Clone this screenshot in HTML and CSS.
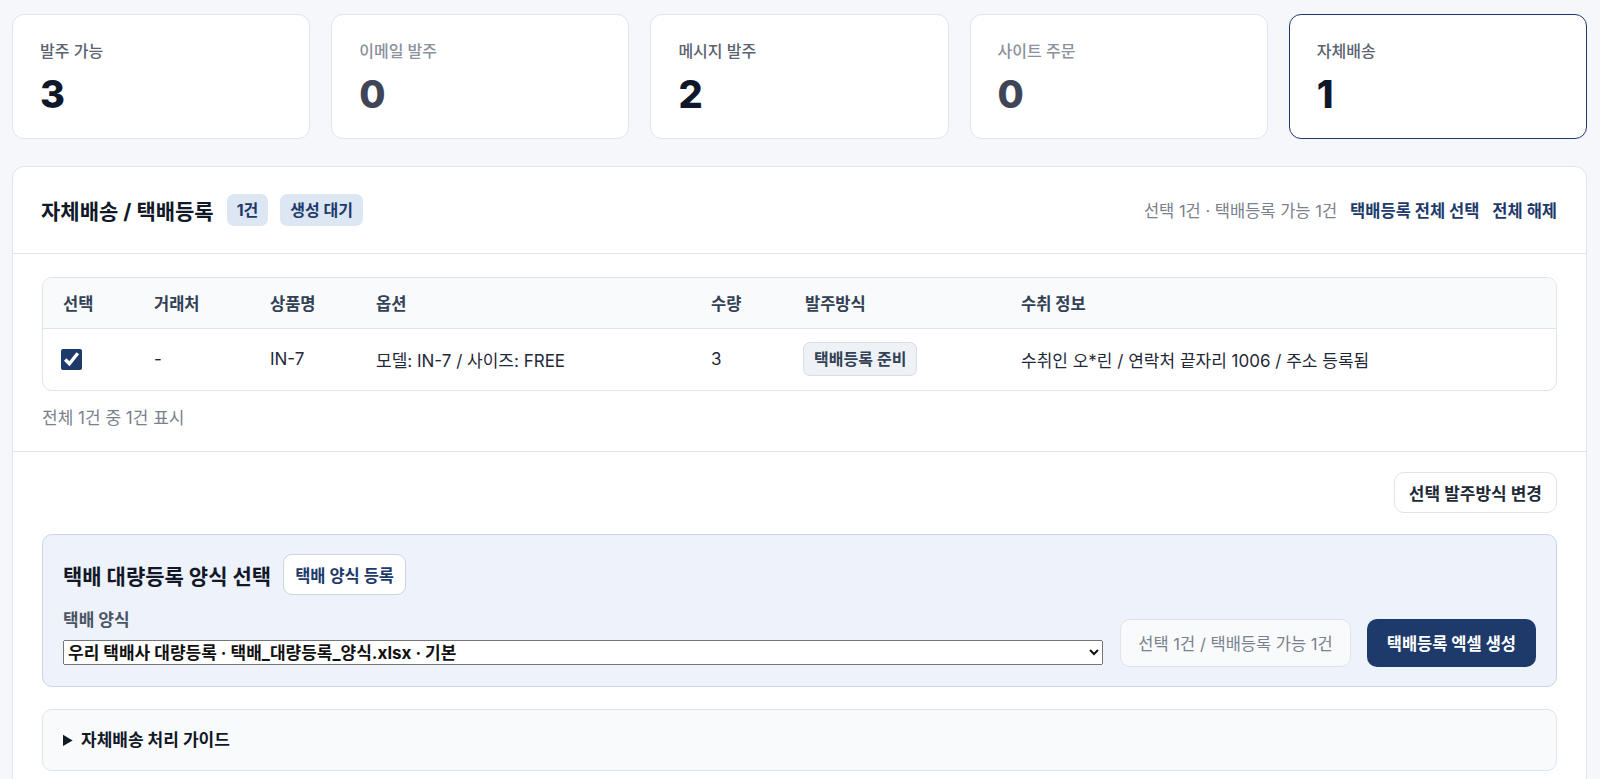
FILE: index.html
```
<!DOCTYPE html>
<html lang="ko">
<head>
  <meta charset="UTF-8">
  <title>자체배송 / 택배등록</title>
  <meta name="viewport" content="width=device-width, initial-scale=1.0">
  <link rel="stylesheet" href="styles.css">
</head>
<body>

  <section class="stats">
    <div class="stat-card">
      <div class="stat-label strong">발주 가능</div>
      <div class="stat-value">3</div>
    </div>
    <div class="stat-card">
      <div class="stat-label">이메일 발주</div>
      <div class="stat-value muted">0</div>
    </div>
    <div class="stat-card">
      <div class="stat-label strong">메시지 발주</div>
      <div class="stat-value">2</div>
    </div>
    <div class="stat-card">
      <div class="stat-label">사이트 주문</div>
      <div class="stat-value muted">0</div>
    </div>
    <div class="stat-card active">
      <div class="stat-label strong">자체배송</div>
      <div class="stat-value">1</div>
    </div>
  </section>

  <section class="panel">
    <div class="panel-header">
      <div class="panel-title">
        <h2>자체배송 / 택배등록</h2>
        <span class="badge">1건</span>
        <span class="badge">생성 대기</span>
      </div>
      <div class="panel-actions">
        <span class="summary-text">선택 1건 · 택배등록 가능 1건</span>
        <a href="#" class="link-btn">택배등록 전체 선택</a>
        <a href="#" class="link-btn">전체 해제</a>
      </div>
    </div>

    <div class="table-section">
      <div class="table-wrap">
        <table class="order-table">
          <thead>
            <tr>
              <th class="col-check">선택</th>
              <th class="col-vendor">거래처</th>
              <th class="col-product">상품명</th>
              <th class="col-option">옵션</th>
              <th class="col-qty">수량</th>
              <th class="col-method">발주방식</th>
              <th>수취 정보</th>
            </tr>
          </thead>
          <tbody>
            <tr>
              <td><input type="checkbox" class="row-check" checked></td>
              <td>-</td>
              <td>IN-7</td>
              <td>모델: IN-7 / 사이즈: FREE</td>
              <td>3</td>
              <td><span class="tag">택배등록 준비</span></td>
              <td>수취인 오*린 / 연락처 끝자리 1006 / 주소 등록됨</td>
            </tr>
          </tbody>
        </table>
      </div>
      <p class="table-count">전체 1건 중 1건 표시</p>
    </div>

    <div class="action-section">
      <div class="action-row">
        <button type="button" class="btn-outline">선택 발주방식 변경</button>
      </div>

      <div class="courier-box">
        <div class="courier-main">
          <div class="courier-title">
            <h3>택배 대량등록 양식 선택</h3>
            <button type="button" class="btn-white">택배 양식 등록</button>
          </div>
          <label for="courierForm" class="field-label">택배 양식</label>
          <select id="courierForm" class="courier-select">
            <option>우리 택배사 대량등록 · 택배_대량등록_양식.xlsx · 기본</option>
          </select>
        </div>
        <div class="courier-side">
          <div class="info-box">선택 1건 / 택배등록 가능 1건</div>
          <button type="button" class="btn-primary">택배등록 엑셀 생성</button>
        </div>
      </div>

      <details class="guide">
        <summary>자체배송 처리 가이드</summary>
      </details>
    </div>
  </section>

</body>
</html>
```

FILE: styles.css
```
:root {
  --navy: #1d3a6b;
  --border: #dde4ee;
  --text: #1f2937;
  --grey: #7a818c;
  --bg: #f5f7fb;
}

* {
  box-sizing: border-box;
}

body {
  font-family: Inter, "Noto Sans CJK KR", sans-serif;
  background: var(--bg);
  color: var(--text);
  margin: 0;
  padding: 14px 13px 40px 12px;
}

/* stat cards */
.stats {
  display: grid;
  grid-template-columns: repeat(5, 1fr);
  gap: 21px;
}

.stat-card {
  background: white;
  border: 1px solid var(--border);
  border-radius: 12px;
  padding: 25px 27px 0;
  height: 125px;
}

.stat-card.active {
  border: 1.5px solid var(--navy);
}

.stat-label {
  font-size: 16px;
  line-height: 22px;
  color: #8a919c;
  font-weight: 500;
}

.stat-label.strong {
  color: #5b6370;
}

.stat-value {
  font-family: Inter, sans-serif;
  font-size: 38px;
  line-height: 44px;
  font-weight: 800;
  color: #0f172a;
  margin-top: 10px;
}

.stat-value.muted {
  color: #3f4556;
}

/* main panel */
.panel {
  margin-top: 27px;
  background: white;
  border: 1px solid var(--border);
  border-radius: 12px;
}

.panel-header {
  display: flex;
  justify-content: space-between;
  align-items: center;
  height: 87px;
  padding: 0 29px 0 28px;
  border-bottom: 1px solid var(--border);
}

.panel-title {
  display: flex;
  align-items: center;
  gap: 12px;
}

.panel-title h2 {
  font-size: 21px;
  font-weight: 700;
  color: #111827;
  margin: 0 1px 0 0;
}

.badge {
  background: #dde6f3;
  color: var(--navy);
  font-size: 16px;
  font-weight: 700;
  border-radius: 7px;
  padding: 0 10px;
  line-height: 32px;
}

.panel-actions {
  display: flex;
  align-items: center;
  gap: 13px;
  font-size: 16.5px;
}

.summary-text {
  color: var(--grey);
}

.link-btn {
  color: var(--navy);
  font-weight: 700;
  text-decoration: none;
}

/* table */
.table-section {
  padding: 23px 29px 0;
  border-bottom: 1px solid var(--border);
}

.table-wrap {
  border: 1px solid var(--border);
  border-radius: 10px;
  overflow: hidden;
}

.order-table {
  width: 100%;
  border-collapse: collapse;
  table-layout: fixed;
}

.order-table th {
  background: #f8fafc;
  text-align: left;
  font-size: 16.5px;
  font-weight: 700;
  color: #334155;
  height: 50px;
  padding: 0 20px;
  border-bottom: 1px solid var(--border);
}

.order-table td {
  font-size: 17px;
  color: #1f2937;
  height: 62px;
  padding: 0 20px;
}

.col-check { width: 91px; }
.col-vendor { width: 116px; }
.col-product { width: 106px; }
.col-option { width: 335px; }
.col-qty { width: 94px; }
.col-method { width: 216px; }

.row-check {
  width: 21px;
  height: 21px;
  margin: 0 0 0 -2px;
  accent-color: var(--navy);
  vertical-align: middle;
}

.tag {
  display: inline-block;
  background: #eef2f7;
  border: 1px solid #d5dde8;
  border-radius: 7px;
  padding: 0 10px;
  line-height: 32px;
  font-size: 16px;
  font-weight: 600;
  color: #334155;
  margin-left: -2px;
}

.table-count {
  font-size: 17px;
  color: var(--grey);
  margin: 0;
  padding: 16px 0 22px;
  line-height: 22px;
}

/* actions */
.action-section {
  padding: 20px 29px 24px;
}

.action-row {
  display: flex;
  justify-content: flex-end;
}

.btn-outline {
  font-family: inherit;
  background: white;
  border: 1px solid var(--border);
  border-radius: 10px;
  padding: 0 14px;
  height: 41px;
  font-size: 17px;
  font-weight: 700;
  color: #1f2937;
  cursor: pointer;
}

.courier-box {
  margin-top: 21px;
  background: #eef2fa;
  border: 1px solid #c9d5e6;
  border-radius: 10px;
  padding: 19px 20px 19px;
  display: flex;
  align-items: flex-end;
  gap: 17px;
}

.courier-main {
  flex: 1;
}

.courier-title {
  display: flex;
  align-items: center;
  gap: 12px;
}

.courier-title h3 {
  font-size: 21px;
  font-weight: 700;
  color: #111827;
  margin: 0;
}

.btn-white {
  font-family: inherit;
  background: white;
  border: 1px solid #c9d5e6;
  border-radius: 9px;
  height: 41px;
  padding: 0 11px;
  font-size: 16.5px;
  font-weight: 700;
  color: var(--navy);
  cursor: pointer;
}

.field-label {
  display: block;
  font-size: 17px;
  font-weight: 700;
  color: #4b5563;
  line-height: 22px;
  margin: 14px 0 9px;
}

.courier-select {
  display: block;
  width: 100%;
  height: 25px;
  margin-bottom: 2px;
  font-family: inherit;
  font-size: 17px;
  font-weight: 700;
  color: #111;
}

.courier-side {
  display: flex;
  gap: 16px;
  align-items: center;
}

.info-box {
  background: #f8fafc;
  border: 1px solid var(--border);
  border-radius: 10px;
  height: 48px;
  padding: 0 17px;
  display: flex;
  align-items: center;
  font-size: 16.5px;
  color: var(--grey);
}

.btn-primary {
  font-family: inherit;
  background: var(--navy);
  color: white;
  border: none;
  border-radius: 10px;
  height: 48px;
  padding: 0 20px;
  font-size: 16.5px;
  font-weight: 700;
  cursor: pointer;
}

.guide {
  margin-top: 22px;
  background: #f8fafc;
  border: 1px solid var(--border);
  border-radius: 10px;
  padding: 19px 20px;
}

.guide summary {
  font-size: 17px;
  font-weight: 700;
  color: #111827;
  line-height: 22px;
  cursor: pointer;
}
```
